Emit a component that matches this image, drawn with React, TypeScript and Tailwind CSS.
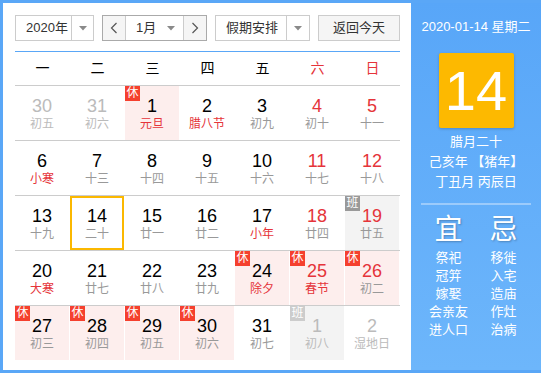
import React from 'react';

type Day = {
  n: number;
  l: string;
  other?: boolean; // from prev/next month
  fest?: boolean;
  wk?: boolean;
  bg?: 'pink' | 'gray';
  badge?: '休' | '班' | '班2';
  today?: boolean;
};

const WEEK = ['一', '二', '三', '四', '五', '六', '日'];

const ROWS: Day[][] = [
  [
    { n: 30, l: '初五', other: true },
    { n: 31, l: '初六', other: true },
    { n: 1, l: '元旦', fest: true, bg: 'pink', badge: '休' },
    { n: 2, l: '腊八节', fest: true },
    { n: 3, l: '初九' },
    { n: 4, l: '初十', wk: true },
    { n: 5, l: '十一', wk: true },
  ],
  [
    { n: 6, l: '小寒', fest: true },
    { n: 7, l: '十三' },
    { n: 8, l: '十四' },
    { n: 9, l: '十五' },
    { n: 10, l: '十六' },
    { n: 11, l: '十七', wk: true },
    { n: 12, l: '十八', wk: true },
  ],
  [
    { n: 13, l: '十九' },
    { n: 14, l: '二十', today: true },
    { n: 15, l: '廿一' },
    { n: 16, l: '廿二' },
    { n: 17, l: '小年', fest: true },
    { n: 18, l: '廿四', wk: true },
    { n: 19, l: '廿五', wk: true, bg: 'gray', badge: '班' },
  ],
  [
    { n: 20, l: '大寒', fest: true },
    { n: 21, l: '廿七' },
    { n: 22, l: '廿八' },
    { n: 23, l: '廿九' },
    { n: 24, l: '除夕', fest: true, bg: 'pink', badge: '休' },
    { n: 25, l: '春节', fest: true, wk: true, bg: 'pink', badge: '休' },
    { n: 26, l: '初二', wk: true, bg: 'pink', badge: '休' },
  ],
  [
    { n: 27, l: '初三', bg: 'pink', badge: '休' },
    { n: 28, l: '初四', bg: 'pink', badge: '休' },
    { n: 29, l: '初五', bg: 'pink', badge: '休' },
    { n: 30, l: '初六', bg: 'pink', badge: '休' },
    { n: 31, l: '初七' },
    { n: 1, l: '初八', other: true, bg: 'gray', badge: '班2' },
    { n: 2, l: '湿地日', other: true },
  ],
];

const YI = ['祭祀', '冠笄', '嫁娶', '会亲友', '进人口'];
const JI = ['移徙', '入宅', '造庙', '作灶', '治病'];

const Caret = () => (
  <svg width="8" height="5" viewBox="0 0 8 5">
    <path d="M0 0 L8 0 L4 4.5 Z" fill="#8a8a8a" />
  </svg>
);

const Chevron = ({ dir }: { dir: 'l' | 'r' }) => (
  <svg width="8" height="12" viewBox="0 0 8 12">
    <path
      d={dir === 'l' ? 'M6.5 1 L1.5 6 L6.5 11' : 'M1.5 1 L6.5 6 L1.5 11'}
      fill="none"
      stroke="#555"
      strokeWidth="1.2"
    />
  </svg>
);

function Cell({ d }: { d: Day }) {
  const numColor = d.other ? 'text-[#bbbbbb]' : d.wk ? 'text-[#e5343a]' : 'text-black';
  const lunarColor = d.other ? 'text-[#bbbbbb]' : d.fest ? 'text-[#e5343a]' : 'text-[#999999]';
  const bg = d.bg === 'pink' ? 'bg-[#fdeeed]' : d.bg === 'gray' ? 'bg-[#f3f3f3]' : 'bg-white';
  return (
    <div className={`relative flex flex-col items-center pt-[10px] border-r border-white ${bg}`}>
      {d.badge && (
        <span
          className={`absolute left-0 top-0 w-[15px] h-[15px] text-[12px] leading-[15px] text-center text-white ${
            d.badge === '休' ? 'bg-[#f5402e]' : d.badge === '班' ? 'bg-[#999999]' : 'bg-[#cccccc]'
          }`}
        >
          {d.badge === '班2' ? '班' : d.badge}
        </span>
      )}
      <span className={`text-[18px] leading-[20px] ${numColor}`}>{d.n}</span>
      <span className={`text-[12px] leading-[16px] ${lunarColor}`}>{d.l}</span>
      {d.today && <div className="absolute inset-0 border-2 border-[#fbb800]" />}
    </div>
  );
}

export default function App() {
  return (
    <div className="w-[541px] h-[373px] bg-[#5aa7f7] pl-[3px] py-[3px] flex font-['Liberation_Sans','Noto_Sans_CJK_SC',sans-serif]">
      {/* Left: calendar */}
      <div className="w-[408px] h-full bg-white pl-[12px] pr-[11px] pt-[12px]">
        <div className="flex gap-2 h-[26px] text-[13px] text-[#333]">
          <div className="w-[79px] flex border border-[#cccccc]">
            <div className="w-[55px] flex items-center pl-[10px]">2020年</div>
            <div className="flex-1 flex items-center justify-center border-l border-[#cccccc]">
              <Caret />
            </div>
          </div>
          <div className="w-[105px] flex border border-[#aaaaaa]">
            <div className="w-[23px] flex items-center justify-center bg-[#f5f5f5] border-r border-[#cccccc]">
              <Chevron dir="l" />
            </div>
            <div className="flex-1 flex items-center justify-between pl-[10px] pr-[8px]">
              <span>1月</span>
              <Caret />
            </div>
            <div className="w-[23px] flex items-center justify-center bg-[#f5f5f5] border-l border-[#cccccc]">
              <Chevron dir="r" />
            </div>
          </div>
          <div className="w-[95px] flex border border-[#cccccc]">
            <div className="w-[70px] flex items-center pl-[10px]">假期安排</div>
            <div className="flex-1 flex items-center justify-center border-l border-[#cccccc]">
              <Caret />
            </div>
          </div>
          <div className="w-[82px] flex items-center justify-center bg-[#f5f5f5] border border-[#cccccc]">
            返回今天
          </div>
        </div>

        <div className="mt-[10px] border-t border-[#5aa7f7] grid grid-cols-7 h-[34px] text-[14px]">
          {WEEK.map((w, i) => (
            <div key={w} className={`flex items-center justify-center ${i >= 5 ? 'text-[#e5343a]' : 'text-black'}`}>
              {w}
            </div>
          ))}
        </div>

        {ROWS.map((row, r) => (
          <div key={r} className="grid grid-cols-7 h-[55px] border-t border-[#cccccc]">
            {row.map((d, i) => (
              <Cell key={i} d={d} />
            ))}
          </div>
        ))}
      </div>

      {/* Right: today panel */}
      <div className="w-[130px] h-full bg-gradient-to-b from-[#58a6f8] to-[#6db6fb] flex flex-col items-center text-white">
        <div className="pt-[14px] text-[13px] leading-[20px]">2020-01-14 星期二</div>
        <div className="mt-[16px] w-[75px] h-[75px] rounded-[2px] bg-[#fdb900] shadow-[0_1px_3px_rgba(0,0,0,0.2)] flex items-center justify-center text-[56px] leading-none">
          14
        </div>
        <div className="mt-[4px] text-[13px] leading-[20px] text-center">
          <div>腊月二十</div>
          <div>己亥年 【猪年】</div>
          <div>丁丑月 丙辰日</div>
        </div>
        <div className="mt-[11px] w-[110px] h-[2px] bg-[#9ccbfb]" />
        <div className="mt-[9px] w-[110px] grid grid-cols-2">
          <div className="flex flex-col items-center">
            <div className="text-[28px] leading-[32px] [text-shadow:1px_1px_2px_rgba(0,0,0,0.25)]">宜</div>
            <div className="mt-[3px] text-[13px] leading-[18px] flex flex-col items-center">
              {YI.map((t) => (
                <div key={t}>{t}</div>
              ))}
            </div>
          </div>
          <div className="flex flex-col items-center">
            <div className="text-[28px] leading-[32px] [text-shadow:1px_1px_2px_rgba(0,0,0,0.25)]">忌</div>
            <div className="mt-[3px] text-[13px] leading-[18px] flex flex-col items-center">
              {JI.map((t) => (
                <div key={t}>{t}</div>
              ))}
            </div>
          </div>
        </div>
      </div>
    </div>
  );
}
